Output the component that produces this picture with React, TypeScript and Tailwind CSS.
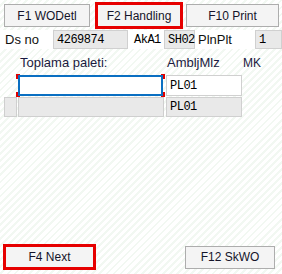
const btn =
	"flex items-center justify-center border border-[#adadad] bg-[#f4f4f4] text-[12px] text-[#14142a]";
const cell =
	"flex h-[19px] items-center border border-[#d0d0d0] px-[3px] font-['Liberation_Mono',monospace] text-[12px] tracking-[-0.5px] text-black";

export default function App() {
	return (
		<div className="flex h-[274px] w-[282px] flex-col bg-[repeating-linear-gradient(135deg,#ffffff_0px,#ffffff_3px,#f2f8f2_3px,#f2f8f2_5px)] font-['Liberation_Sans',sans-serif]">
			<div className="flex items-center pt-[2px]">
				<div className={`${btn} ml-[4px] h-[23px] w-[86px]`}>F1 WODetl</div>
				<div className={`${btn} ml-[5px] h-[27px] w-[88px] border-[3px] border-[#e60000]`}>
					F2 Handling
				</div>
				<div className={`${btn} ml-[3px] h-[23px] w-[93px]`}>F10 Print</div>
			</div>
			<div className="mt-[1px] flex h-[19px] items-center bg-white">
				<div className="w-[53px] pl-[5px] text-[13px] text-[#111]">Ds no</div>
				<div className={`${cell} w-[75px] bg-[#e9e9e9]`}>4269874</div>
				<div className={`${cell} ml-[2px] w-[34px] border-transparent bg-white`}>AkA1</div>
				<div className={`${cell} w-[31px] bg-[#e9e9e9] px-[2px]`}>SH02</div>
				<div className="w-[60px] pl-[3px] text-[13px] text-[#111]">PlnPlt</div>
				<div className={`${cell} flex-1 bg-[#e9e9e9]`}>1</div>
			</div>
			<div className="mt-[7px] flex h-[14px] items-center text-[13px] text-[#1a1a40]">
				<div className="w-[165px] pl-[20px]">Toplama paleti:</div>
				<div className="w-[78px] pl-[2px]">AmbljMlz</div>
				<div className="text-[12px]">MK</div>
			</div>
			<div className="mt-[5px] flex items-center">
				<div className="relative ml-[18px] h-[21px] w-[145px] border-[2px] border-[#0a6fc2] bg-white">
					<span className="absolute -left-[4px] -top-[3px] h-[5px] w-[4px] border-l-2 border-t border-[#e00000]" />
					<span className="absolute -bottom-[3px] -left-[4px] h-[5px] w-[4px] border-b border-l-2 border-[#e00000]" />
					<span className="absolute -right-[4px] -top-[3px] h-[5px] w-[4px] border-r-2 border-t border-[#e00000]" />
					<span className="absolute -bottom-[3px] -right-[4px] h-[5px] w-[4px] border-b border-r-2 border-[#e00000]" />
				</div>
				<div className={`${cell} ml-[3px] h-[21px] w-[76px] bg-white`}>PL01</div>
			</div>
			<div className="mt-[1px] flex items-center">
				<div className="ml-[4px] h-[20px] w-[13px] border border-[#cfcfcf] bg-[#e9e9e9]" />
				<div className="ml-[1px] h-[20px] w-[146px] border border-[#cfcfcf] bg-[#e9e9e9]" />
				<div className={`${cell} ml-[2px] h-[20px] w-[76px] bg-[#e9e9e9]`}>PL01</div>
			</div>
			<div className="mt-auto mb-[4px] flex items-center justify-between">
				<div className={`${btn} ml-[3px] h-[26px] w-[93px] border-[3px] border-[#e60000]`}>F4 Next</div>
				<div className={`${btn} mr-[7px] h-[23px] w-[90px]`}>F12 SkWO</div>
			</div>
		</div>
	);
}
